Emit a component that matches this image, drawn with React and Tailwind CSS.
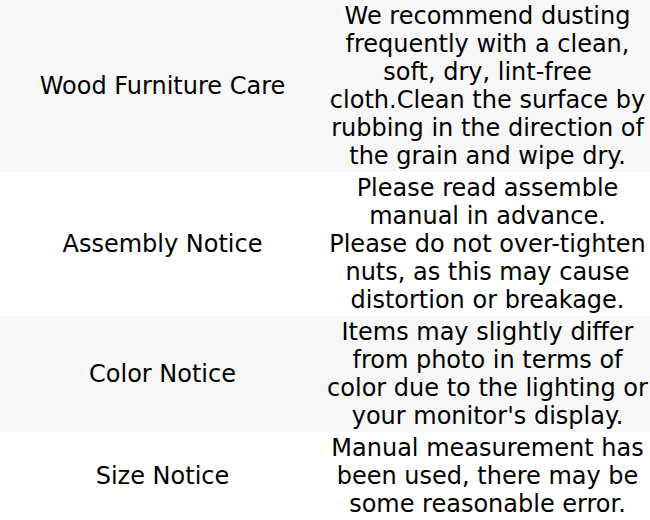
export default function App() {
  const rows = [
    {
      label: "Wood Furniture Care",
      text: "We recommend dusting frequently with a clean, soft, dry, lint-free cloth.Clean the surface by rubbing in the direction of the grain and wipe dry.",
    },
    {
      label: "Assembly Notice",
      text: "Please read assemble manual in advance. Please do not over-tighten nuts, as this may cause distortion or breakage.",
    },
    {
      label: "Color Notice",
      text: "Items may slightly differ from photo in terms of color due to the lighting or your monitor's display.",
    },
    {
      label: "Size Notice",
      text: "Manual measurement has been used, there may be some reasonable error.",
    },
  ];

  return (
    <div className="w-[650px] bg-white text-black font-['DejaVu_Sans',sans-serif]">
      <table className="w-full table-fixed border-collapse">
        <tbody>
          {rows.map((row, i) => (
            <tr key={i} className={i % 2 === 0 ? "bg-[#f7f7f7]" : "bg-white"}>
              <td className="w-1/2 px-[2px] py-[2px] text-center align-middle text-[24px] leading-[28px]">
                {row.label}
              </td>
              <td className="w-1/2 px-[2px] py-[2px] text-center align-middle text-[24px] leading-[28px]">
                {row.text}
              </td>
            </tr>
          ))}
        </tbody>
      </table>
    </div>
  );
}
